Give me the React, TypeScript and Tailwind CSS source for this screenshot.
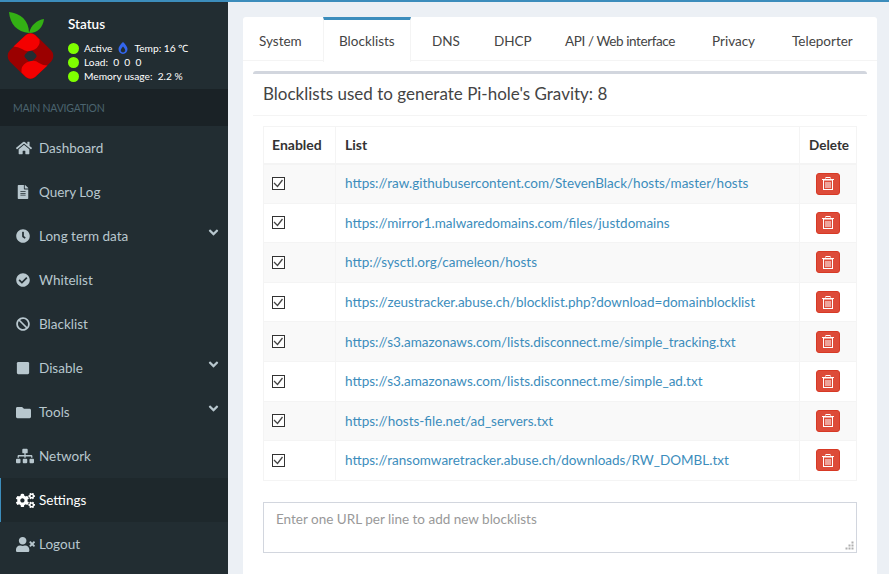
import React from 'react';
import {
  FaHome,
  FaFileAlt,
  FaClock,
  FaCheckCircle,
  FaBan,
  FaStop,
  FaFolder,
  FaSitemap,
  FaCogs,
  FaUserTimes,
  FaAngleDown,
  FaBurn,
} from 'react-icons/fa';

const font = "font-['Lato','Noto_Sans',sans-serif]";

const navItems = [
  { label: 'Dashboard', icon: <FaHome size={16} /> },
  { label: 'Query Log', icon: <FaFileAlt size={14} /> },
  { label: 'Long term data', icon: <FaClock size={14} />, arrow: true },
  { label: 'Whitelist', icon: <FaCheckCircle size={14} /> },
  { label: 'Blacklist', icon: <FaBan size={14} /> },
  { label: 'Disable', icon: <FaStop size={14} />, arrow: true },
  { label: 'Tools', icon: <FaFolder size={15} />, arrow: true },
  { label: 'Network', icon: <FaSitemap size={18} /> },
  { label: 'Settings', icon: <FaCogs size={19} />, active: true },
  { label: 'Logout', icon: <FaUserTimes size={19} /> },
];

const tabs = [
  { label: 'System', width: 'w-[80px]' },
  { label: 'Blocklists', width: 'w-[88px] mr-[5px]', active: true },
  { label: 'DNS', width: 'w-[62px]' },
  { label: 'DHCP', width: 'w-[71px]' },
  { label: 'API / Web interface', width: 'w-[147px] tracking-[-0.4px]' },
  { label: 'Privacy', width: 'w-[80px]' },
  { label: 'Teleporter', width: 'w-[80px]' },
];

const lists = [
  'https://raw.githubusercontent.com/StevenBlack/hosts/master/hosts',
  'https://mirror1.malwaredomains.com/files/justdomains',
  'http://sysctl.org/cameleon/hosts',
  'https://zeustracker.abuse.ch/blocklist.php?download=domainblocklist',
  'https://s3.amazonaws.com/lists.disconnect.me/simple_tracking.txt',
  'https://s3.amazonaws.com/lists.disconnect.me/simple_ad.txt',
  'https://hosts-file.net/ad_servers.txt',
  'https://ransomwaretracker.abuse.ch/downloads/RW_DOMBL.txt',
];

function Logo() {
  const petal = 'M13.5 46.5 L26 35 Q30.5 31.5 35 35 L39.5 39.5 Q40.5 46 34.5 49.5 Q27 53 22 49 Q18 46.5 13.5 46.5 Z';
  return (
    <svg width="68" height="87" viewBox="0 2 68 87" className="block">
      <path d="M29 33 C17 32 10 24 9 12 C20 13 29 20 29 33Z" fill="#33b014" />
      <path d="M29 33 C31 25 37 20 44 19 C43 27 38 33 29 33Z" fill="#33b014" />
      <rect x="12" y="37.5" width="37" height="37" rx="8" transform="rotate(45 30.5 56)" fill="#9b0000" />
      <rect x="25.5" y="51" width="10" height="10" rx="2.5" transform="rotate(45 30.5 56)" fill="#222d32" />
      <path d={petal} fill="#f40000" />
      <path d={petal} fill="#f40000" transform="rotate(180 30.5 56)" />
    </svg>
  );
}

function Dot() {
  return <span className="w-[11px] h-[11px] rounded-full bg-[#7fff00] shrink-0" />;
}

function Checkbox() {
  return (
    <span className="block w-[13px] h-[13px] border border-[#333] bg-white">
      <svg viewBox="0 0 11 11" className="block w-[11px] h-[11px]">
        <path d="M1 5 L4.5 8.5 L9.5 2" fill="none" stroke="#444" strokeWidth="1.3" />
      </svg>
    </span>
  );
}

function TrashIcon() {
  return (
    <svg width="12" height="13" viewBox="0 0 12 13" className="block" fill="none" stroke="#fff" strokeWidth="1">
      <rect x="4" y="0.5" width="4" height="2" />
      <path d="M0 2.5 H12" />
      <rect x="1.5" y="3" width="9" height="9.5" />
      <path d="M4 5 V11 M6 5 V11 M8 5 V11" />
    </svg>
  );
}

export default function App() {
  return (
    <div className={`${font} w-[889px] h-[574px] overflow-hidden flex flex-col bg-[#ecf0f5] text-[13.5px] text-[#333]`}>
      <div className="h-[2px] bg-[#3c8dbc] shrink-0" />
      <div className="flex flex-1 min-h-0">
        {/* sidebar */}
        <aside className="w-[228px] shrink-0 bg-[#222d32] flex flex-col">
          <div className="h-[87px] flex shrink-0">
            <div className="w-[68px] shrink-0">
              <Logo />
            </div>
            <div className="pt-[13px] text-white">
              <div className="text-[13.5px] font-semibold leading-[18px]">Status</div>
              <div className="mt-[8px] text-[10.2px] leading-[14px] flex flex-col">
                <div className="flex items-center gap-[5px]">
                  <Dot />
                  <span>Active</span>
                  <FaBurn size={12} className="text-[#3366ee]" />
                  <span>Temp: 16 ℃</span>
                </div>
                <div className="flex items-center gap-[5px]">
                  <Dot />
                  <span>Load:&nbsp; 0&nbsp; 0&nbsp; 0</span>
                </div>
                <div className="flex items-center gap-[5px]">
                  <Dot />
                  <span>Memory usage:&nbsp; 2.2 %</span>
                </div>
              </div>
            </div>
          </div>
          <div className="h-[37px] shrink-0 bg-[#1a2226] text-[#4b646f] text-[10.5px] tracking-[-0.2px] pl-[13px] leading-[38px]">MAIN NAVIGATION</div>
          <nav className="flex flex-col">
            {navItems.map((item) => (
              <div
                key={item.label}
                className={`h-[44px] flex items-center pr-[7px] ${
                  item.active ? 'bg-[#1e282c] text-white border-l border-[#3c8dbc] pl-[15px]' : 'text-[#b8c7ce] pl-[16px]'
                }`}
              >
                <span className="w-[23px] shrink-0 flex items-center">{item.icon}</span>
                <span className="flex-1">{item.label}</span>
                {item.arrow && <FaAngleDown size={15} className="-mt-[7px]" />}
              </div>
            ))}
          </nav>
        </aside>

        {/* content */}
        <main className="flex-1 min-w-0 pl-[15px] pr-[12px] pt-[15px]">
          <div className="bg-white rounded-t-[3px] h-[600px]">
            <div className="flex h-[44px] border-b border-[#f4f4f4] text-[#444] whitespace-nowrap">
              {tabs.map((tab) =>
                tab.active ? (
                  <div
                    key={tab.label}
                    className={`${tab.width} h-[45px] pl-[15px] border-t-[3px] border-x border-t-[#3c8dbc] border-x-[#f4f4f4] bg-white flex items-center`}
                  >
                    {tab.label}
                  </div>
                ) : (
                  <div key={tab.label} className={`${tab.width} pl-[16px] pt-[5px] flex items-center`}>
                    {tab.label}
                  </div>
                ),
              )}
            </div>
            <div className="mx-[10px] mt-[10px] border-t-[3px] border-[#d2d6de] rounded-t-[3px]">
              <h3 className="h-[42px] border-b border-[#f4f4f4] px-[10px] text-[17px] leading-[39px] text-[#444]">
                Blocklists used to generate Pi-hole's Gravity: 8
              </h3>
              <div className="px-[10px] pt-[10px]">
                <table className="w-[594px] table-fixed border-collapse border border-[#f4f4f4]">
                  <thead>
                    <tr className="h-[37px] text-[14px]">
                      <th className="w-[72px] border border-[#f4f4f4] border-b-2 text-left px-[8px] font-bold">Enabled</th>
                      <th className="border border-[#f4f4f4] border-b-2 text-left px-[9px] font-bold">List</th>
                      <th className="w-[57px] border border-[#f4f4f4] border-b-2 text-left pl-[9px] pr-0 font-bold text-[13.5px]">Delete</th>
                    </tr>
                  </thead>
                  <tbody>
                    {lists.map((url, i) => (
                      <tr key={url} className={`h-[39.6px] ${i % 2 === 0 ? 'bg-[#f9f9f9]' : 'bg-white'}`}>
                        <td className="border border-[#f4f4f4] px-[8px]">
                          <Checkbox />
                        </td>
                        <td className="border border-[#f4f4f4] px-[9px] text-[#3c8dbc] whitespace-nowrap">{url}</td>
                        <td className="border border-[#f4f4f4] px-[8px]">
                          <div className="w-[24px] h-[22px] mx-auto bg-[#dd4b39] border border-[#d73925] rounded-[3px] flex items-center justify-center">
                            <TrashIcon />
                          </div>
                        </td>
                      </tr>
                    ))}
                  </tbody>
                </table>
                <div className="relative mt-[21px] w-[594px]">
                  <textarea
                    readOnly
                    placeholder="Enter one URL per line to add new blocklists"
                    className="block w-[594px] h-[51px] border border-[#d2d6de] px-[12px] py-[6px] resize-none placeholder:text-[#999] outline-none"
                  />
                  {/* resize grip */}
                  <svg width="9" height="9" viewBox="0 0 9 9" className="absolute right-[3px] bottom-[3px]" fill="#b0b0b0">
                    <rect x="6.5" y="0.5" width="2" height="2" />
                    <rect x="3.5" y="3.5" width="2" height="2" />
                    <rect x="6.5" y="3.5" width="2" height="2" />
                    <rect x="0.5" y="6.5" width="2" height="2" />
                    <rect x="3.5" y="6.5" width="2" height="2" />
                    <rect x="6.5" y="6.5" width="2" height="2" />
                  </svg>
                </div>
              </div>
            </div>
          </div>
        </main>
      </div>
    </div>
  );
}
